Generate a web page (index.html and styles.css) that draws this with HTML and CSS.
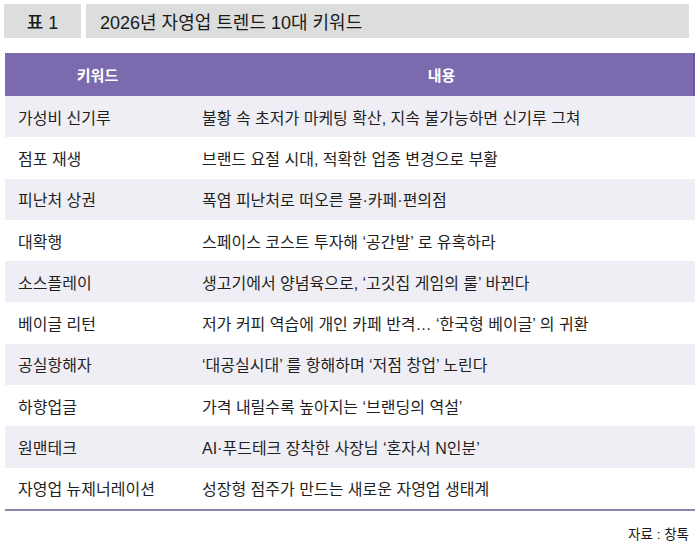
FILE: index.html
```html
<!DOCTYPE html>
<html lang="ko">
<head>
<meta charset="utf-8">
<link rel="stylesheet" href="styles.css">
</head>
<body>
<div class="page">
  <div class="titlebar">
    <div class="tag">표 1</div>
    <div class="title">2026년 자영업 트렌드 10대 키워드</div>
  </div>
  <div class="table">
    <div class="row head">
      <div class="c1">키워드</div>
      <div class="c2">내용</div>
    </div>
    <div class="row odd"><div class="c1">가성비 신기루</div><div class="c2">불황 속 초저가 마케팅 확산, 지속 불가능하면 신기루 그쳐</div></div>
    <div class="row"><div class="c1">점포 재생</div><div class="c2">브랜드 요절 시대, 적확한 업종 변경으로 부활</div></div>
    <div class="row odd"><div class="c1">피난처 상권</div><div class="c2">폭염 피난처로 떠오른 몰·카페·편의점</div></div>
    <div class="row"><div class="c1">대확행</div><div class="c2">스페이스 코스트 투자해 ‘공간발’ 로 유혹하라</div></div>
    <div class="row odd"><div class="c1">소스플레이</div><div class="c2">생고기에서 양념육으로, ‘고깃집 게임의 룰’ 바뀐다</div></div>
    <div class="row"><div class="c1">베이글 리턴</div><div class="c2">저가 커피 역습에 개인 카페 반격… ‘한국형 베이글’ 의 귀환</div></div>
    <div class="row odd"><div class="c1">공실항해자</div><div class="c2">‘대공실시대’ 를 항해하며 ‘저점 창업’ 노린다</div></div>
    <div class="row"><div class="c1">하향업글</div><div class="c2">가격 내릴수록 높아지는 ‘브랜딩의 역설’</div></div>
    <div class="row odd"><div class="c1">원맨테크</div><div class="c2">AI·푸드테크 장착한 사장님 ‘혼자서 N인분’</div></div>
    <div class="row"><div class="c1">자영업 뉴제너레이션</div><div class="c2">성장형 점주가 만드는 새로운 자영업 생태계</div></div>
  </div>
  <div class="source">자료 : 창톡</div>
</div>
</body>
</html>
```
FILE: styles.css
```css
* { box-sizing: border-box; }
html, body { margin: 0; padding: 0; background: #fff; }
body {
  font-family: "Liberation Sans", "Noto Sans CJK KR", sans-serif;
  color: #222;
}
.page {
  width: 700px;
  height: 546px;
  padding: 4px 5px 0 4px;
}
.titlebar {
  display: flex;
  gap: 5px;
  height: 34px;
  padding-right: 6px;
}
.tag, .title {
  background: #dcdedd;
  display: flex;
  align-items: center;
  font-size: 18px;
  color: #1a1a1a;
}
.tag {
  width: 77px;
  justify-content: center;
  font-weight: 500;
}
.title {
  flex: 1;
  padding-left: 14px;
}
.table {
  margin-top: 15px;
  margin-left: 1px;
  border-bottom: 2px solid #8a87a8;
}
.row {
  display: flex;
  height: 41.3px;
  align-items: center;
  font-size: 16px;
  color: #1f1f1f;
}
.row.odd { background: #efeef5; }
.row.head {
  height: 43px;
  background: #7b6aae;
  border-right: 2px solid #6a5a9e;
  color: #fff;
  font-size: 15px;
  font-weight: 700;
}
.c1 {
  width: 185px;
  padding-left: 13px;
}
.c2 {
  flex: 1;
  padding-left: 12px;
}
.head .c1, .head .c2 {
  padding-left: 0;
  text-align: center;
}
.source {
  text-align: right;
  font-size: 13.5px;
  padding-top: 12px;
  padding-right: 6px;
  color: #1a1a1a;
}
```
